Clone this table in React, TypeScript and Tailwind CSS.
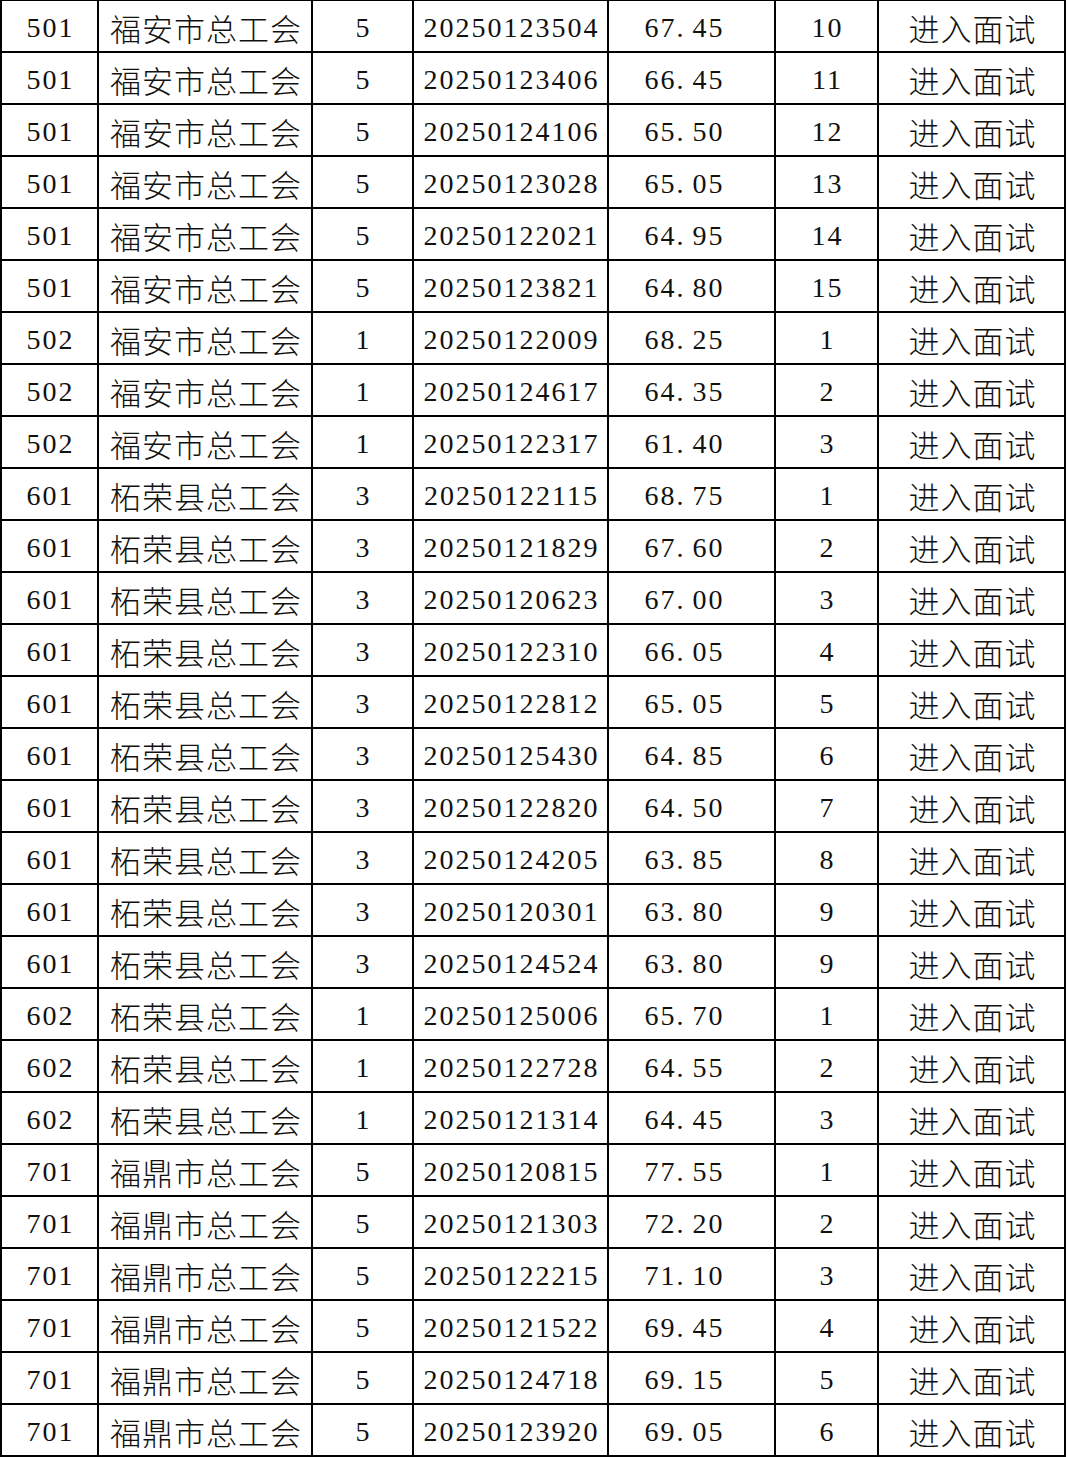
const rows: [string, string, string, string, string, string][] = [
  ["501", "福安市总工会", "5", "20250123504", "67.45", "10"],
  ["501", "福安市总工会", "5", "20250123406", "66.45", "11"],
  ["501", "福安市总工会", "5", "20250124106", "65.50", "12"],
  ["501", "福安市总工会", "5", "20250123028", "65.05", "13"],
  ["501", "福安市总工会", "5", "20250122021", "64.95", "14"],
  ["501", "福安市总工会", "5", "20250123821", "64.80", "15"],
  ["502", "福安市总工会", "1", "20250122009", "68.25", "1"],
  ["502", "福安市总工会", "1", "20250124617", "64.35", "2"],
  ["502", "福安市总工会", "1", "20250122317", "61.40", "3"],
  ["601", "柘荣县总工会", "3", "20250122115", "68.75", "1"],
  ["601", "柘荣县总工会", "3", "20250121829", "67.60", "2"],
  ["601", "柘荣县总工会", "3", "20250120623", "67.00", "3"],
  ["601", "柘荣县总工会", "3", "20250122310", "66.05", "4"],
  ["601", "柘荣县总工会", "3", "20250122812", "65.05", "5"],
  ["601", "柘荣县总工会", "3", "20250125430", "64.85", "6"],
  ["601", "柘荣县总工会", "3", "20250122820", "64.50", "7"],
  ["601", "柘荣县总工会", "3", "20250124205", "63.85", "8"],
  ["601", "柘荣县总工会", "3", "20250120301", "63.80", "9"],
  ["601", "柘荣县总工会", "3", "20250124524", "63.80", "9"],
  ["602", "柘荣县总工会", "1", "20250125006", "65.70", "1"],
  ["602", "柘荣县总工会", "1", "20250122728", "64.55", "2"],
  ["602", "柘荣县总工会", "1", "20250121314", "64.45", "3"],
  ["701", "福鼎市总工会", "5", "20250120815", "77.55", "1"],
  ["701", "福鼎市总工会", "5", "20250121303", "72.20", "2"],
  ["701", "福鼎市总工会", "5", "20250122215", "71.10", "3"],
  ["701", "福鼎市总工会", "5", "20250121522", "69.45", "4"],
  ["701", "福鼎市总工会", "5", "20250124718", "69.15", "5"],
  ["701", "福鼎市总工会", "5", "20250123920", "69.05", "6"],
];

const num = "font-['Liberation_Serif',serif] text-[28px] tracking-[2px] pl-[2px] pt-[3px]";
const cjk = "font-['Noto_Sans_CJK_SC',sans-serif] font-light text-[31px] tracking-[1px] pl-[2px] pt-[4px]";
const cell = "flex items-center justify-center border-r-2 border-black";

// score like 67.45: the dot takes a full half-width cell, as in the original font
const Score = ({ v }: { v: string }) => {
  const [a, b] = v.split(".");
  return (
    <span>
      {a}
      <span className="inline-block w-[16px] text-left">.</span>
      {b}
    </span>
  );
};

export default function App() {
  return (
    <div className="w-[1069px] h-[1457px] bg-white text-[#111]">
      <div className="w-[1066px] border-l-2 border-t border-black">
        {rows.map((r, i) => (
          <div
            key={i}
            className="grid grid-cols-[97px_214px_101px_195px_167px_103px_187px] h-[52px] border-b-2 border-black"
          >
            <div className={`${cell} ${num}`}>{r[0]}</div>
            <div className={`${cell} ${cjk}`}>{r[1]}</div>
            <div className={`${cell} ${num}`}>{r[2]}</div>
            <div className={`${cell} ${num}`}>{r[3]}</div>
            <div className={`${cell} ${num} pr-[16px]`}>
              <Score v={r[4]} />
            </div>
            <div className={`${cell} ${num}`}>{r[5]}</div>
            <div className={`${cell} ${cjk}`}>进入面试</div>
          </div>
        ))}
      </div>
    </div>
  );
}
